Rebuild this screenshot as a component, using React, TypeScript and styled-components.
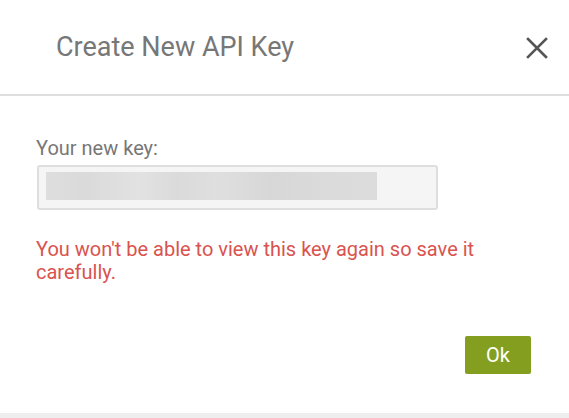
import React from "react";
import styled, { createGlobalStyle } from "styled-components";

const GlobalStyle = createGlobalStyle`
  html, body {
    margin: 0;
    padding: 0;
    background: #eeeeee;
    font-family: Roboto, "Liberation Sans", Arial, sans-serif;
  }
`;

const Modal = styled.div`
  width: 569px;
  height: 413px;
  background: #ffffff;
  display: flex;
  flex-direction: column;
  box-sizing: border-box;
`;

const Header = styled.div`
  height: 96px;
  box-sizing: border-box;
  display: flex;
  align-items: center;
  justify-content: space-between;
  padding: 0 20px 0 56px;
  border-bottom: 2px solid #dedede;
`;

const Title = styled.h2`
  margin: 0;
  font-size: 27px;
  font-weight: 400;
  color: #777777;
`;

const CloseButton = styled.button`
  border: 0;
  background: none;
  padding: 0;
  width: 24px;
  height: 24px;
  display: flex;
  align-items: center;
  justify-content: center;
  cursor: pointer;
  margin-top: 1px;
`;

const Body = styled.div`
  flex: 1;
  display: flex;
  flex-direction: column;
  padding: 41px 38px 0 36px;
`;

const Label = styled.div`
  font-size: 20px;
  color: #777777;
  line-height: 23px;
`;

const KeyBox = styled.div`
  margin: 5px 0 0 1px;
  width: 401px;
  height: 45px;
  box-sizing: border-box;
  border: 2px solid #dedede;
  border-radius: 3px;
  background: #f5f5f5;
  padding: 5px 0 0 7px;
`;

const BlurredKey = styled.div`
  width: 331px;
  height: 28px;
  background: linear-gradient(
    90deg,
    #dedede 0%,
    #dadada 12%,
    #e2e2e2 28%,
    #dadada 40%,
    #dfdfdf 52%,
    #d7d7d7 68%,
    #dbdbdb 85%,
    #dcdcdc 100%
  );
`;

const Warning = styled.p`
  margin: 28px 0 0 0;
  font-size: 20px;
  line-height: 23px;
  color: #d9534f;
`;

const Footer = styled.div`
  margin-top: auto;
  display: flex;
  justify-content: flex-end;
  padding-bottom: 39px;
`;

const OkButton = styled.button`
  width: 66px;
  height: 38px;
  border: 0;
  border-radius: 2px;
  background: #849f1f;
  color: #ffffff;
  font-family: Roboto, "Liberation Sans", Arial, sans-serif;
  font-size: 20px;
  padding: 0;
  cursor: pointer;
`;

export default function App() {
  return (
    <>
      <GlobalStyle />
      <Modal>
        <Header>
          <Title>Create New API Key</Title>
          <CloseButton aria-label="Close">
            <svg width="22" height="22" viewBox="0 0 22 22">
              <path
                d="M2 2 L20 20 M20 2 L2 20"
                stroke="#555555"
                strokeWidth="2.6"
                strokeLinecap="square"
                fill="none"
              />
            </svg>
          </CloseButton>
        </Header>
        <Body>
          <Label>Your new key:</Label>
          <KeyBox>
            <BlurredKey />
          </KeyBox>
          <Warning>
            You won't be able to view this key again so save it carefully.
          </Warning>
          <Footer>
            <OkButton>Ok</OkButton>
          </Footer>
        </Body>
      </Modal>
    </>
  );
}
